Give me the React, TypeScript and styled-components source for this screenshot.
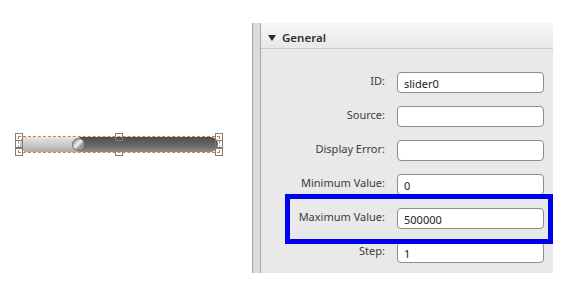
import React from 'react'
import styled, { createGlobalStyle } from 'styled-components'

const Global = createGlobalStyle`
  html, body {
    margin: 0;
    padding: 0;
    background: #fff;
    font-family: "Noto Sans", "Open Sans", sans-serif;
  }
`

const Page = styled.div`
  display: flex;
  width: 579px;
  height: 288px;
  overflow: hidden;
`

const Canvas = styled.div`
  width: 252px;
  display: flex;
  align-items: center;
  padding-left: 18px;
  box-sizing: border-box;
`

const SliderFrame = styled.div`
  position: relative;
  width: 202px;
  height: 17px;
  box-sizing: border-box;
  border: 1px dashed #e8792c;
  padding: 0 1px;
  display: flex;
  align-items: center;
`

const Track = styled.div`
  position: relative;
  flex: 1;
  height: 15px;
  border-radius: 8px;
  background: linear-gradient(#4e4e4e, #6a6a6a 60%, #8c8c8c);
  overflow: hidden;
`

const Fill = styled.div`
  height: 100%;
  background: linear-gradient(#e6e6e6, #c4c4c4 60%, #a9a9a9);
  border-right: 1px solid #8a8a8a;
`

const Thumb = styled.div`
  position: absolute;
  top: 1px;
  width: 13px;
  height: 13px;
  border-radius: 50%;
  border: 1px solid #6b6b6b;
  box-sizing: border-box;
  background: linear-gradient(135deg, #6f6f6f 0%, #f4f4f4 45%, #8c8c8c 70%, #d0d0d0 100%);
`

const Handle = styled.span<{ $x: string; $y: string }>`
  position: absolute;
  left: ${p => p.$x};
  top: ${p => p.$y};
  width: 6px;
  height: 6px;
  margin: -4px 0 0 -4px;
  border: 1px solid #7c7c7c;
  background: transparent;
`

const Panel = styled.div`
  margin-top: 23px;
  width: 301px;
  height: 250px;
  display: flex;
`

const Gutter = styled.div`
  width: 7px;
  border-left: 1px solid #a8a8a8;
  border-right: 1px solid #a8a8a8;
  background: #dcdcdc;
`

const Body = styled.div`
  position: relative;
  flex: 1;
  background: #e9e9e9;
`

const Header = styled.div`
  height: 26px;
  box-sizing: border-box;
  display: flex;
  align-items: center;
  gap: 6px;
  padding: 4px 0 0 7px;
  background: linear-gradient(#f6f6f6, #e8e8e8);
  border-bottom: 1px solid #c9c9c9;
  font-size: 11.5px;
  font-weight: 600;
  color: #2f2f2f;
`

const Caret = styled.span`
  width: 0;
  height: 0;
  border-left: 4.5px solid transparent;
  border-right: 4.5px solid transparent;
  border-top: 6px solid #2a2a2a;
`

const Fields = styled.div`
  display: grid;
  grid-template-columns: 124px 147px;
  column-gap: 12px;
  row-gap: 13px;
  padding-top: 23px;
`

const Label = styled.label`
  text-align: right;
  font-size: 11px;
  line-height: 15px;
  padding-top: 1px;
  color: #3c3c3c;
`

const Input = styled.div`
  height: 21px;
  box-sizing: border-box;
  border: 1px solid #8c8c8c;
  border-radius: 4px;
  background: #fff;
  font-size: 11px;
  line-height: 21px;
  padding-left: 6px;
  color: #222;
`

const Highlight = styled.div`
  position: absolute;
  left: 24px;
  top: 171px;
  width: 268px;
  height: 50px;
  box-sizing: border-box;
  border: 5px solid #0000f0;
`

const fields = [
  { label: 'ID:', value: 'slider0' },
  { label: 'Source:', value: '' },
  { label: 'Display Error:', value: '' },
  { label: 'Minimum Value:', value: '0' },
  { label: 'Maximum Value:', value: '500000' },
  { label: 'Step:', value: '1' },
]

const handles: [string, string][] = [
  ['0%', '0%'], ['50%', '0%'], ['100%', '0%'],
  ['0%', '50%'], ['100%', '50%'],
  ['0%', '100%'], ['50%', '100%'], ['100%', '100%'],
]

export default function App() {
  return (
    <Page>
      <Global />
      <Canvas>
        <SliderFrame>
          <Track>
            <Fill style={{ width: '30%' }} />
            <Thumb style={{ left: '26.5%' }} />
          </Track>
          {handles.map(([x, y], i) => (
            <Handle key={i} $x={x} $y={y} />
          ))}
        </SliderFrame>
      </Canvas>
      <Panel>
        <Gutter />
        <Body>
          <Header>
            <Caret />
            General
          </Header>
          <Fields>
            {fields.map(f => (
              <React.Fragment key={f.label}>
                <Label>{f.label}</Label>
                <Input>{f.value}</Input>
              </React.Fragment>
            ))}
          </Fields>
          <Highlight />
        </Body>
      </Panel>
    </Page>
  )
}
